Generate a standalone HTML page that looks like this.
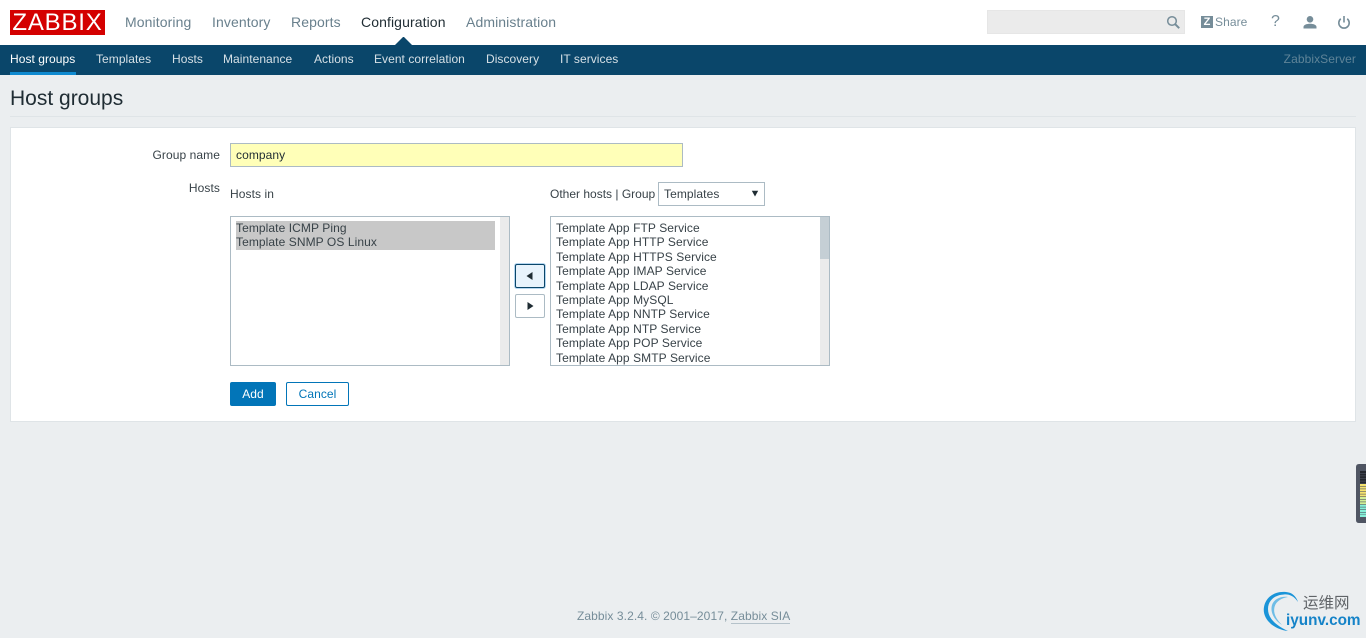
<!DOCTYPE html>
<html><head><meta charset="utf-8"><title>Host groups</title>
<style>
html,body{margin:0;padding:0}
body{width:1366px;height:638px;overflow:hidden;background:#ebeef0;position:relative;font-family:"Liberation Sans",Arial,sans-serif;font-size:12px;letter-spacing:.08px;color:#1f2c33}
.a{position:absolute;white-space:nowrap}
.top{left:0;top:0;width:1366px;height:45px;background:#fff}
.m{top:14px;font-size:14px;line-height:16px;letter-spacing:.1px;color:#69808d}
.s{top:52px;line-height:15px;letter-spacing:.05px;color:#d6e0e6}
.l{line-height:14.4px;color:#384248}
.box{background:#fff;border:1px solid #acbbc4;box-sizing:border-box}
</style></head><body>
<div class="a top"></div>
<div class="a" style="left:10px;top:10px;width:95px;height:25px;background:#d40000;color:#fff;font-size:24px;line-height:25px;text-align:center;letter-spacing:.8px;overflow:hidden">ZABBIX</div>
<div class="a m" style="left:125px">Monitoring</div>
<div class="a m" style="left:212px">Inventory</div>
<div class="a m" style="left:291px">Reports</div>
<div class="a m" style="left:361px;color:#1f2c33">Configuration</div>
<div class="a m" style="left:466px">Administration</div>
<svg class="a" style="left:395px;top:37px" width="18" height="8"><path d="M0 8L8 0h1l8 8z" fill="#0a466a"/></svg>
<div class="a" style="left:987px;top:10px;width:198px;height:24px;background:#ebebeb;border:1px solid #e6e6e6;box-sizing:border-box"></div>
<svg class="a" style="left:1166px;top:15px" width="15" height="15" fill="none" stroke="#768d99" stroke-width="1.500"><circle cx="6" cy="6" r="4.300"/><path d="M9.200 9.200l4 4" stroke-width="2"/></svg>
<div class="a" style="left:1201px;top:16px;width:12px;height:12px;background:#768d99;color:#fff;font-size:11px;font-weight:bold;line-height:12px;text-align:center">Z</div>
<div class="a" style="left:1215px;top:14px;line-height:16px;color:#768d99">Share</div>
<div class="a" style="left:1271px;top:13px;font-size:16px;line-height:18px;color:#768d99">?</div>
<svg class="a" style="left:1302px;top:14px" width="16" height="16" fill="#768d99"><circle cx="8" cy="5.300" r="3.300"/><path d="M1.500 14.500v-1.500C1.500 10.800 5 9.800 8 9.800s6.500 1 6.500 3.200v1.500z"/></svg>
<svg class="a" style="left:1336px;top:15px" width="16" height="15" fill="none" stroke="#768d99" stroke-width="1.600"><path d="M8 1v6.500M4.800 3.800a5.200 5.200 0 1 0 6.400 0"/></svg>

<div class="a" style="left:0;top:45px;width:1366px;height:30px;background:#0a466a"></div>
<div class="a s" style="left:10px;color:#fff">Host groups</div>
<div class="a" style="left:10px;top:72px;width:66px;height:3px;background:#0f8ad0"></div>
<div class="a s" style="left:96px">Templates</div>
<div class="a s" style="left:172px">Hosts</div>
<div class="a s" style="left:223px">Maintenance</div>
<div class="a s" style="left:314px">Actions</div>
<div class="a s" style="left:374px">Event correlation</div>
<div class="a s" style="left:486px">Discovery</div>
<div class="a s" style="left:560px">IT services</div>
<div class="a" style="right:10px;top:52px;line-height:15px;color:#5f8498">ZabbixServer</div>

<div class="a" style="left:10px;top:86px;font-size:21px;line-height:26px;letter-spacing:0;color:#1f2c33">Host groups</div>
<div class="a" style="left:10px;top:116px;width:1346px;height:1px;background:#dfe4e7"></div>

<div class="a" style="left:10px;top:127px;width:1346px;height:295px;background:#fff;border:1px solid #dfe4e7;box-sizing:border-box"></div>

<div class="a" style="right:1146px;top:148px;line-height:15px;color:#384248">Group name</div>
<div class="a" style="left:230px;top:143px;width:453px;height:24px;background:#ffffb8;border:1px solid #acbbc4;box-sizing:border-box;padding-left:5px;line-height:22px;color:#1f2c33">company</div>
<div class="a" style="right:1146px;top:181px;line-height:15px;color:#384248">Hosts</div>
<div class="a" style="left:230px;top:187px;line-height:15px;color:#384248">Hosts in</div>
<div class="a" style="left:550px;top:187px;line-height:15px;letter-spacing:0;color:#384248">Other hosts | Group</div>
<div class="a box" style="left:658px;top:182px;width:107px;height:24px;padding-left:5px;line-height:22px;color:#384248">Templates</div>
<svg class="a" style="left:751px;top:190px" width="8" height="7"><path d="M.8 .8h6.400L4 6.500z" fill="#1f2c33"/></svg>

<div class="a box" style="left:230px;top:216px;width:280px;height:150px"></div>
<div class="a" style="left:500px;top:217px;width:9px;height:148px;background:#ebebeb"></div>
<div class="a" style="left:236px;top:221px;width:259px;height:29px;background:#c8c8c8"></div>
<div class="a l" style="left:236px;top:221px">Template ICMP Ping<br>Template SNMP OS Linux</div>

<div class="a" style="left:515px;top:264px;width:30px;height:24px;background:#e8f3fc;border:1px solid #0a466a;border-radius:2px;box-sizing:border-box;box-shadow:0 0 0 1px #b5d6f0"></div>
<svg class="a" style="left:526px;top:272px" width="7" height="8"><path d="M6.500 0v8L.5 4z" fill="#1f2c33"/></svg>
<div class="a" style="left:515px;top:294px;width:30px;height:24px;background:#fff;border:1px solid #acbbc4;border-radius:2px;box-sizing:border-box"></div>
<svg class="a" style="left:527px;top:302px" width="7" height="8"><path d="M.5 0v8L6.500 4z" fill="#1f2c33"/></svg>

<div class="a box" style="left:550px;top:216px;width:280px;height:150px"></div>
<div class="a" style="left:820px;top:217px;width:9px;height:148px;background:#ebebeb"></div>
<div class="a" style="left:820px;top:217px;width:9px;height:42px;background:#c5cfd5"></div>
<div class="a l" style="left:556px;top:221px;color:#384248">Template App FTP Service<br>Template App HTTP Service<br>Template App HTTPS Service<br>Template App IMAP Service<br>Template App LDAP Service<br>Template App MySQL<br>Template App NNTP Service<br>Template App NTP Service<br>Template App POP Service<br>Template App SMTP Service</div>

<div class="a" style="left:230px;top:382px;width:46px;height:24px;background:#0275b8;border-radius:2px;color:#fff;text-align:center;line-height:24px">Add</div>
<div class="a" style="left:286px;top:382px;width:63px;height:24px;background:#fff;border:1px solid #0275b8;border-radius:2px;box-sizing:border-box;color:#0275b8;text-align:center;line-height:22px">Cancel</div>

<div class="a" style="left:577px;top:609px;line-height:15px;color:#768d99">Zabbix 3.2.4. © 2001–2017, <span style="border-bottom:1px solid #b5c2ca">Zabbix SIA</span></div>

<svg class="a" style="left:1356px;top:464px" width="10" height="59"><path d="M10 0H3Q0 0 0 3v53q0 3 3 3h7z" fill="#4f5563"/>
<g fill="#24272e"><rect x="4" y="7" width="6" height="2"/><rect x="4" y="9.600" width="6" height="2"/><rect x="4" y="12.200" width="6" height="2"/><rect x="4" y="14.800" width="6" height="2"/><rect x="4" y="17.400" width="6" height="2"/></g>
<g fill="#f5e26e"><rect x="4" y="20" width="6" height="2"/><rect x="4" y="22.600" width="6" height="2"/><rect x="4" y="25.200" width="6" height="2"/><rect x="4" y="27.800" width="6" height="2"/><rect x="4" y="30.400" width="6" height="2"/></g>
<g fill="#d2ee96"><rect x="4" y="33" width="6" height="2"/><rect x="4" y="35.600" width="6" height="2"/><rect x="4" y="38.200" width="6" height="2"/></g>
<g fill="#85f0d8"><rect x="4" y="40.800" width="6" height="2"/><rect x="4" y="43.400" width="6" height="2"/><rect x="4" y="46" width="6" height="2"/><rect x="4" y="48.600" width="6" height="2"/><rect x="4" y="51" width="6" height="2"/></g></svg>

<svg class="a" style="left:1262px;top:590px" width="42" height="44"><path d="M26 41C10 39 0 28 2 17 4 6 14 1 24 2c6 .5 10 4 12 10-4-6-9-8-14-7.500C12 5 6 11 6 19c0 10 9 17 20 22z" fill="#1a94d8"/><path d="M20 35C12 30 8 22 10 15 12 9 19 6 26 7 20 8 14 11 12.500 17 11 23 14 29 20 35z" fill="#6fbde6"/></svg>
<div class="a" style="left:1303px;top:595px;font-family:'Liberation Sans','Noto Sans CJK SC','WenQuanYi Zen Hei',sans-serif;font-size:15.5px;line-height:18px;letter-spacing:0;color:#606468">运维网</div>
<div class="a" style="left:1286px;top:611px;font-size:15.3px;font-weight:bold;line-height:20px;color:#1583c8;letter-spacing:0">iyunv.com</div>
</body></html>
